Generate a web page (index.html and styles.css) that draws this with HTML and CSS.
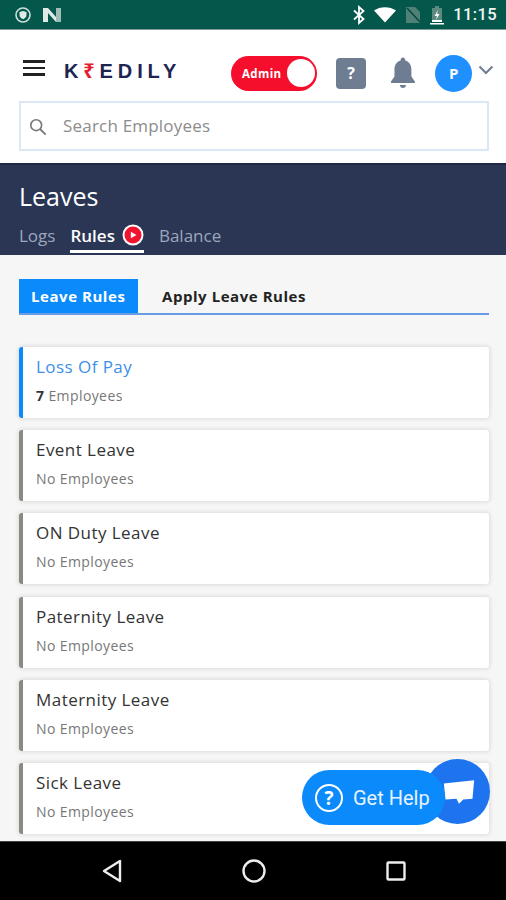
FILE: index.html
```html
<!DOCTYPE html>
<html lang="en">
<head>
    <meta charset="UTF-8">
    <meta name="viewport" content="width=device-width, initial-scale=1.0">
    <title>Kredily Leaves</title>
    <link rel="stylesheet" href="styles.css">
</head>
<body>
    <div class="phone">
        <div class="status-bar">
            <div class="status-left">
                <svg width="18" height="18" viewBox="0 0 18 18"><circle cx="9" cy="9" r="7" fill="none" stroke="#cfe0dc" stroke-width="1.6"/><path d="M5.5 6 9 5l3.500 1v3c0 2-1.500 3.500-3.500 4.200C7 12.500 5.500 11 5.500 9z" fill="#dfeae7"/></svg>
                <svg width="20" height="18" viewBox="0 0 20 18"><path d="M1 2h5l8 9V2h5v14h-5L6 7v9H1z" fill="#dfeae7"/><path d="M14 2h5v14h-5z" fill="#9fbdb7"/></svg>
            </div>
            <div class="status-right">
                <svg width="12" height="20" viewBox="0 0 12 20"><path d="M1 5.500 10.500 14 6 18V2l4.500 4L1 14.500" fill="none" stroke="#fff" stroke-width="1.800"/></svg>
                <svg width="22" height="16" viewBox="0 0 22 16"><path d="M0 3.500C6 -1 16 -1 22 3.500L11 15.500z" fill="#fff"/></svg>
                <svg width="16" height="18" viewBox="0 0 16 18"><path d="M1 17V1h9l5 5v11z" fill="#4f8177"/><path d="M2 2l13 14" stroke="#04493f" stroke-width="1.500"/></svg>
                <svg width="14" height="20" viewBox="0 0 14 20"><path d="M5 1h4v2h3v14H2V3h3z" fill="#5c8a80"/><path d="M2 15h10v2H2zM0 18h14v1.500H0z" fill="#fff"/><path d="M8 5 4.500 11H7l-1 4 3.500-6H7z" fill="#fff"/></svg>
                <span class="clock">11:15</span>
            </div>
        </div>

        <header class="top">
            <div class="top-row">
                <div class="burger"><span></span><span></span><span></span></div>
                <div class="logo">K<span class="logo-rupee">₹</span>EDILY</div>
                <div class="admin-toggle"><span>Admin</span><i></i></div>
                <div class="help-square">?</div>
                <svg class="bell" width="30" height="34" viewBox="0 0 30 34"><path d="M15 1.500c1.300 0 2.300 1 2.300 2.300v.7c4 1.200 6.200 4.600 6.200 9v7l3.500 5v1.500H3V25.500l3.500-5v-7c0-4.400 2.200-7.800 6.200-9v-.7c0-1.300 1-2.300 2.300-2.300z" fill="#6f7d92"/><path d="M12 29h6c0 1.700-1.300 3-3 3s-3-1.300-3-3z" fill="#6f7d92"/></svg>
                <div class="avatar">P</div>
                <svg class="chev" width="16" height="10" viewBox="0 0 16 10"><path d="M1.500 1.500 8 8l6.500-6.500" fill="none" stroke="#6f7d92" stroke-width="2"/></svg>
            </div>
            <div class="search">
                <svg class="search-icon" width="18" height="18" viewBox="0 0 20 20"><circle cx="8" cy="8" r="6" fill="none" stroke="#777" stroke-width="1.800"/><path d="m12.500 12.500 6 6" stroke="#777" stroke-width="2"/></svg>
                <span>Search Employees</span>
            </div>
        </header>

        <section class="banner">
            <h1>Leaves</h1>
            <nav class="banner-tabs">
                <a>Logs</a>
                <a class="active">Rules
                    <svg width="22" height="22" viewBox="0 0 22 22"><circle cx="11" cy="11" r="10.500" fill="#fff"/><circle cx="11" cy="11" r="8.500" fill="#f0142f"/><path d="M8.800 7.800 14.500 11l-5.700 3.200z" fill="#fff"/></svg>
                </a>
                <a>Balance</a>
            </nav>
        </section>

        <main class="content">
            <div class="rule-tabs">
                <div class="rule-tab current">Leave Rules</div>
                <div class="rule-tab">Apply Leave Rules</div>
            </div>
            <div class="card-list">
                <div class="card selected">
                    <div class="card-title">Loss Of Pay</div>
                    <div class="card-sub"><strong>7</strong> Employees</div>
                </div>
                <div class="card">
                    <div class="card-title">Event Leave</div>
                    <div class="card-sub">No Employees</div>
                </div>
                <div class="card">
                    <div class="card-title">ON Duty Leave</div>
                    <div class="card-sub">No Employees</div>
                </div>
                <div class="card">
                    <div class="card-title">Paternity Leave</div>
                    <div class="card-sub">No Employees</div>
                </div>
                <div class="card">
                    <div class="card-title">Maternity Leave</div>
                    <div class="card-sub">No Employees</div>
                </div>
                <div class="card">
                    <div class="card-title">Sick Leave</div>
                    <div class="card-sub">No Employees</div>
                </div>
            </div>

            <div class="chat-bubble">
                <svg width="32" height="28" viewBox="0 0 38 30"><path d="M1 5 37 1l-2 22-11 1-5 5-3-6-13 1z" fill="#fff"/></svg>
            </div>
            <div class="get-help">
                <svg width="30" height="30" viewBox="0 0 30 30"><circle cx="15" cy="15" r="13" fill="none" stroke="#fff" stroke-width="2"/><text x="15" y="21.500" text-anchor="middle" class="help-mark">?</text></svg>
                <span>Get Help</span>
            </div>
        </main>

        <div class="nav-bar">
            <svg class="nav-back" width="20" height="24" viewBox="0 0 20 24"><path d="M18 2v20L2 12z" fill="none" stroke="#eee" stroke-width="2.400" stroke-linejoin="round"/></svg>
            <svg width="24" height="24" viewBox="0 0 24 24"><circle cx="12" cy="12" r="10.500" fill="none" stroke="#eee" stroke-width="2.400"/></svg>
            <svg width="20" height="20" viewBox="0 0 20 20"><rect x="1.500" y="1.500" width="17" height="17" rx="1" fill="none" stroke="#eee" stroke-width="2.400"/></svg>
        </div>
    </div>
</body>
</html>
```

FILE: styles.css
```css
* {
    box-sizing: border-box;
}

html, body {
    margin: 0;
    padding: 0;
}

body {
    font-family: "Open Sans", sans-serif;
    background-color: #000;
}

.phone {
    width: 506px;
    height: 900px;
    display: flex;
    flex-direction: column;
    overflow: hidden;
}

/* android status bar */
.status-bar {
    height: 30px;
    flex: none;
    display: flex;
    justify-content: space-between;
    align-items: center;
    padding: 0 9px 0 14px;
    background-color: #04584b;
    border-bottom: 1px solid #7d9d96;
}

.status-left,
.status-right {
    display: flex;
    align-items: center;
}

.status-left {
    gap: 10px;
}

.status-right {
    gap: 9px;
}

.clock {
    font-family: Roboto, sans-serif;
    font-size: 16.500px;
    font-weight: 500;
    color: #f2f6f5;
    letter-spacing: 0.4px;
}

/* app header */
.top {
    height: 133px;
    flex: none;
    padding: 25px 12px 0 19px;
    background-color: #fff;
}

.top-row {
    height: 36px;
    display: flex;
    align-items: center;
}

.burger {
    width: 22px;
    margin: -10px 0 0 4px;
    display: flex;
    flex-direction: column;
    gap: 4px;
}

.burger span {
    display: block;
    height: 2.500px;
    background-color: #222;
}

.logo {
    width: 168px;
    margin: -6px 0 0 19px;
    font-family: "Liberation Sans", sans-serif;
    font-size: 20px;
    font-weight: 700;
    letter-spacing: 4.900px;
    color: #1d2550;
    white-space: nowrap;
}

.logo-rupee {
    color: #e3202f;
    font-family: "Noto Sans", sans-serif;
}

.admin-toggle {
    width: 86px;
    height: 35px;
    display: flex;
    align-items: center;
    justify-content: space-between;
    padding: 0 1px 0 11px;
    border-radius: 18px;
    background-color: #f50f2d;
    color: #fff;
    font-size: 11.500px;
    font-weight: 700;
    letter-spacing: 0.4px;
}

.admin-toggle i {
    width: 28px;
    height: 28px;
    margin-right: 1px;
    border-radius: 50%;
    background-color: #fff;
}

.help-square {
    width: 31px;
    height: 31px;
    margin-left: 19px;
    border-radius: 4px;
    background-color: #6f7d92;
    color: #fff;
    font-size: 16px;
    font-weight: 700;
    line-height: 31px;
    text-align: center;
}

.bell {
    margin-left: 22px;
}

.avatar {
    width: 37px;
    height: 37px;
    margin-left: 17px;
    border-radius: 50%;
    background-color: #1e90ff;
    color: #fff;
    font-size: 15px;
    font-weight: 700;
    line-height: 37px;
    text-align: center;
}

.chev {
    margin: -6px 0 0 6px;
}

.search {
    width: 470px;
    height: 50px;
    margin-top: 10px;
    display: flex;
    align-items: center;
    gap: 16px;
    padding: 0 0 2px 8px;
    border: 2px solid #dbe7f5;
    background-color: #fff;
    color: #8c8c8c;
    font-size: 17px;
    letter-spacing: 0.2px;
}

.search-icon {
    margin-top: 3px;
}

/* dark banner */
.banner {
    height: 92px;
    flex: none;
    padding: 15px 19px 0;
    background-color: #2a3654;
    border-top: 2px solid #1f2945;
    color: #fff;
}

.banner h1 {
    margin: 0;
    font-size: 25px;
    font-weight: 400;
    line-height: 32px;
}

.banner-tabs {
    display: flex;
    margin-top: 9px;
    gap: 15px;
}

.banner-tabs a {
    height: 32px;
    display: flex;
    align-items: center;
    gap: 7px;
    padding-bottom: 4px;
    color: #9da7bd;
    font-size: 17px;
}

.banner-tabs a.active {
    color: #fff;
    font-weight: 600;
    border-bottom: 3px solid #fff;
    padding-bottom: 1px;
}

/* page content */
.content {
    position: relative;
    flex: 1;
    min-height: 0;
    overflow: hidden;
    padding: 24px 17px 0 19px;
    background-color: #f6f6f6;
}

.rule-tabs {
    display: flex;
    height: 36px;
    border-bottom: 2px solid #6c9be6;
}

.rule-tab {
    padding: 0 12px;
    font-size: 15px;
    font-weight: 700;
    line-height: 35px;
    letter-spacing: 0.55px;
    color: #222;
}

.rule-tab.current {
    width: 119px;
    margin-right: 12px;
    background-color: #0b8bfb;
    color: #fff;
}

.card-list {
    margin-top: 32px;
    display: flex;
    flex-direction: column;
    gap: 12.200px;
}

.card {
    height: 71px;
    flex: none;
    padding: 8px 13px;
    background-color: #fff;
    border-left: 4px solid #8a8a80;
    border-radius: 3px;
    box-shadow: 0 0 4px 1px rgba(0,0,0,0.11);
}

.card.selected {
    border-left-color: #0b8bfb;
}

.card-title {
    font-size: 17px;
    line-height: 24px;
    letter-spacing: 0.45px;
    color: #333;
}

.card.selected .card-title {
    color: #3d8fe8;
}

.card-sub {
    margin-top: 7px;
    font-size: 14px;
    line-height: 20px;
    letter-spacing: 0.4px;
    color: #777;
}

.card-sub strong {
    color: #333;
}

/* floating help */
.chat-bubble {
    position: absolute;
    left: 425px;
    top: 504px;
    width: 65px;
    height: 65px;
    padding: 19px 0 0 18px;
    border-radius: 50%;
    background-color: #1e74ee;
}

.get-help {
    position: absolute;
    left: 302px;
    top: 515px;
    width: 143px;
    height: 55px;
    display: flex;
    align-items: center;
    gap: 9px;
    padding-left: 12px;
    border-radius: 28px;
    background-color: #0b8bfb;
    color: #e8f3ff;
    font-family: Roboto, sans-serif;
    font-size: 20px;
}

.help-mark {
    font-family: "Open Sans", sans-serif;
    font-size: 19px;
    font-weight: 700;
    fill: #fff;
}

/* android nav bar */
.nav-bar {
    height: 59px;
    flex: none;
    display: flex;
    align-items: center;
    justify-content: space-between;
    padding: 0 100px 0 102px;
    background-color: #000;
    border-top: 1px solid #444;
}
```
